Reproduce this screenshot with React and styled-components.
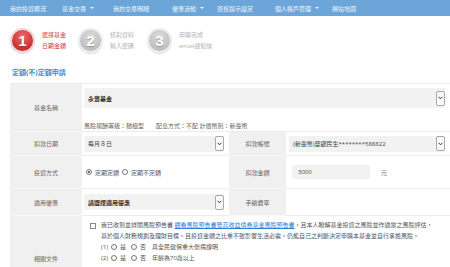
import styled, { createGlobalStyle } from 'styled-components';

const GlobalStyle = createGlobalStyle`
  body {
    margin: 0;
    background: #fff;
    font-family: "Open Sans", "Noto Sans CJK TC", sans-serif;
    color: #555;
  }
  * { box-sizing: border-box; }
`;

const Page = styled.div`
  height: 100vh;
  overflow: hidden;
`;

const Nav = styled.nav`
  height: 16px;
  background: #6ca6d9;
  display: flex;
  align-items: center;
  padding-left: 10px;
`;

const NavItem = styled.span`
  width: ${p => p.$w}px;
  font-size: 6px;
  color: #eef5fb;
  display: flex;
  align-items: center;
  white-space: nowrap;
`;

const Caret = styled.span`
  margin-left: 4px;
  border-left: 2px solid transparent;
  border-right: 2px solid transparent;
  border-top: 2px solid #eef5fb;
`;

const Steps = styled.div`
  display: flex;
  padding: 12px 0 0 10px;
`;

const Step = styled.div`
  display: flex;
  align-items: center;
  gap: 7px;
  width: ${p => p.$w}px;
`;

const Circle = styled.div`
  width: 25px;
  height: 25px;
  border-radius: 50%;
  border: 2px solid ${p => (p.$active ? '#f1d4d4' : '#ececec')};
  background: ${p =>
    p.$active
      ? 'radial-gradient(circle at 50% 30%, #ec6a6a 0%, #d23a3c 55%, #b3242a 100%)'
      : 'radial-gradient(circle at 50% 30%, #dadada 0%, #c6c6c6 55%, #b5b5b5 100%)'};
  box-shadow: 0 1px 1px rgba(0, 0, 0, 0.15);
  display: flex;
  align-items: center;
  justify-content: center;
  color: #fff;
  font-family: "Liberation Sans", Arial, sans-serif;
  font-weight: 700;
  font-size: 15px;
  text-shadow: 0 1px 1px rgba(0, 0, 0, 0.25);
`;

const StepText = styled.div`
  font-size: 6px;
  line-height: 11px;
  color: ${p => (p.$active ? '#d8343a' : '#b4b4b4')};
  white-space: nowrap;
`;

const Title = styled.h2`
  margin: 16px 0 6px 12px;
  font-size: 7px;
  line-height: 8px;
  font-weight: 700;
  color: #3d8fd3;
`;

const Form = styled.div`
  margin-left: 10px;
  display: grid;
  grid-template-columns: 72px 147px 57px 1fr;
  grid-template-rows: 48px 24px 33px 27px 86px;
  border-top: 1px solid #ececec;
`;

const Label = styled.div`
  background: #f0f0f0;
  border-bottom: 1px solid #f7f7f7;
  display: flex;
  align-items: center;
  justify-content: center;
  font-size: 6px;
  color: #666;
`;

const Cell = styled.div`
  grid-column: span ${p => p.$span || 1};
  border-bottom: 1px solid #ececec;
  padding: ${p => p.$pt || 0}px 5px 0 ${p => p.$pl ?? 2}px;
  display: flex;
  flex-direction: ${p => (p.$col ? 'column' : 'row')};
  align-items: ${p => (p.$col ? 'stretch' : 'center')};
  font-size: 6px;
  color: #555;
`;

const Select = styled.div`
  flex: 1;
  height: 16px;
  background: #f2f2f2;
  display: flex;
  align-items: center;
  justify-content: space-between;
  padding: 0 0 0 4px;
  font-size: 6px;
  color: ${p => (p.$bold ? '#333' : '#444')};
  font-weight: ${p => (p.$bold ? 700 : 400)};
  white-space: nowrap;
`;

const ArrowBox = styled.span`
  width: 9px;
  height: 15px;
  border: 1px solid #a9a9a9;
  border-radius: 2px;
  background: #f9f9f9;
  display: flex;
  align-items: center;
  justify-content: center;
`;

const Info = styled.div`
  margin-top: 13px;
  line-height: 10px;
  white-space: pre;
  color: #666;
`;

const RadioDot = styled.span`
  width: 6px;
  height: 6px;
  border-radius: 50%;
  border: 1px solid #777;
  background: #fff;
  display: inline-flex;
  align-items: center;
  justify-content: center;
  margin: 0 3px 0 ${p => p.$ml || 0}px;
  vertical-align: middle;

  &::after {
    content: '';
    width: 2px;
    height: 2px;
    border-radius: 50%;
    background: ${p => (p.$on ? '#333' : 'transparent')};
  }
`;

const RadioLabel = styled.span`
  margin-right: ${p => p.$mr || 0}px;
`;

const AmountInput = styled.div`
  width: 78px;
  height: 14px;
  background: #f2f2f2;
  display: flex;
  align-items: center;
  padding-left: 6px;
  color: #444;
`;

const Unit = styled.span`
  margin-left: 11px;
  color: #777;
`;

const Docs = styled.div`
  display: flex;
  gap: 5px;
  padding-left: 6px;
`;

const CheckBox = styled.span`
  flex: none;
  width: 6px;
  height: 6px;
  margin-top: 3px;
  border: 1px solid #888;
  background: #fff;
`;

const DocText = styled.div`
  line-height: 11px;
  color: #555;
  white-space: nowrap;
`;

const DocLink = styled.a`
  color: #2c7fd4;
  text-decoration: underline;
`;

function Chevron() {
  return (
    <svg width="5" height="4" viewBox="0 0 5 4">
      <path d="M0.6 0.8 L2.5 2.8 L4.4 0.8" fill="none" stroke="#333" strokeWidth="1" />
    </svg>
  );
}

function Dropdown({ children, bold }) {
  return (
    <Select $bold={bold}>
      <span>{children}</span>
      <ArrowBox>
        <Chevron />
      </ArrowBox>
    </Select>
  );
}

const navItems = [
  { text: '我的投資概況', w: 52 },
  { text: '基金交易', w: 51, caret: true },
  { text: '我的交易明細', w: 59 },
  { text: '優惠活動', w: 45, caret: true },
  { text: '簽核提示設定', w: 58 },
  { text: '個人帳戶管理', w: 57, caret: true },
  { text: '網站地圖', w: 40 },
];

const steps = [
  { n: 1, lines: ['選擇基金', '日期金額'], active: true, w: 68 },
  { n: 2, lines: ['核對資料', '輸入密碼'], w: 69 },
  { n: 3, lines: ['申購完成', 'email通知信'], w: 80 },
];

export default function App() {
  return (
    <Page>
      <GlobalStyle />
      <Nav>
        {navItems.map(item => (
          <NavItem key={item.text} $w={item.w}>
            {item.text}
            {item.caret && <Caret />}
          </NavItem>
        ))}
      </Nav>

      <Steps>
        {steps.map(s => (
          <Step key={s.n} $w={s.w}>
            <Circle $active={s.active}>{s.n}</Circle>
            <StepText $active={s.active}>
              {s.lines[0]}
              <br />
              {s.lines[1]}
            </StepText>
          </Step>
        ))}
      </Steps>

      <Title>定額(不)定額申請</Title>

      <Form>
        <Label>基金名稱</Label>
        <Cell $span={3} $col $pt={4}>
          <Dropdown bold>永豐基金</Dropdown>
          <Info>{'風險報酬等級：積極型　　配息方式：不配 計價幣別：新臺幣'}</Info>
        </Cell>

        <Label>扣款日期</Label>
        <Cell $pl={2}>
          <Dropdown>每月８日</Dropdown>
        </Cell>
        <Label>扣款帳號</Label>
        <Cell $pl={3}>
          <Dropdown>(新臺幣)華銀民生********588822</Dropdown>
        </Cell>

        <Label>投資方式</Label>
        <Cell $pl={4}>
          <RadioDot $on />
          <RadioLabel $mr={3}>定期定額</RadioLabel>
          <RadioDot />
          <RadioLabel>定期不定額</RadioLabel>
        </Cell>
        <Label>扣款金額</Label>
        <Cell $pl={6}>
          <AmountInput>3000</AmountInput>
          <Unit>元</Unit>
        </Cell>

        <Label>適用優惠</Label>
        <Cell $pl={2}>
          <Dropdown bold>請選擇適用優惠</Dropdown>
        </Cell>
        <Label>手續費率</Label>
        <Cell />

        <Label>相關文件</Label>
        <Cell $span={3} $col $pt={4}>
          <Docs>
            <CheckBox />
            <DocText>
              我已收到並詳閱風險預告書 <DocLink>觀看風險預告書暨高收益債券基金風險預告書</DocLink>
              ，且本人瞭解基金投資之風險並作適當之風險評估，
              <br />
              基於個人財務規劃及理財目標，且投資金額之比重不致影響生活必需，仍能自己之判斷決定申購本基金並自行承擔風險。
              <br />
              (1)
              <RadioDot $ml={3} />是
              <RadioDot $ml={5} />否　具全民健保重大傷病證明
              <br />
              (2)
              <RadioDot $ml={3} />是
              <RadioDot $ml={5} />否　年齡為70歲以上
            </DocText>
          </Docs>
        </Cell>
      </Form>
    </Page>
  );
}
